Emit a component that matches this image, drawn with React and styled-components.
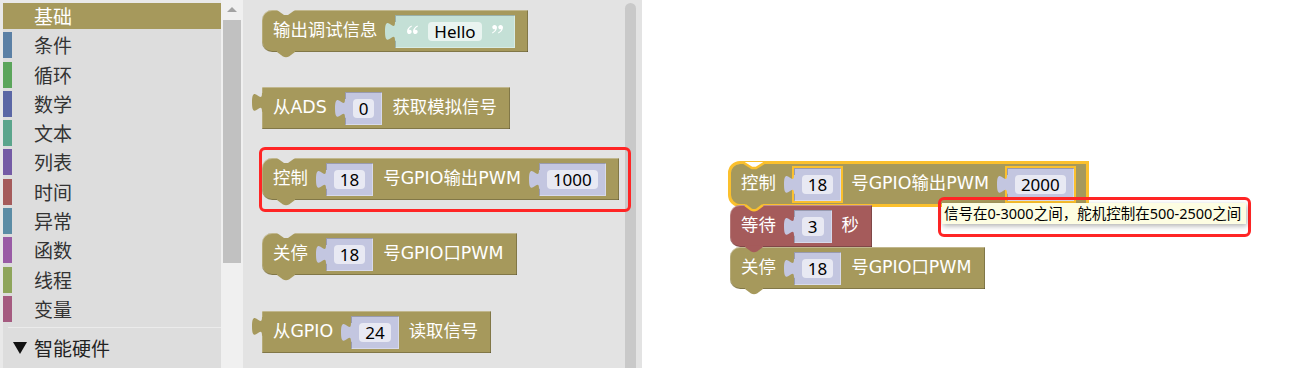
import React from "react";
import styled, { createGlobalStyle, css } from "styled-components";

const GOLD = "#a6995c";
const WAIT = "#a55b5b";
const NUM = "#c3c6e0";
const NUM_FIELD = "#e8e9f3";
const STR = "#c4e0d6";
const STR_FIELD = "#e9f4f0";
const SEL = "#fbc02d";
const FLY_BG = "#e3e3e3";

const GlobalStyle = createGlobalStyle`
  body {
    margin: 0;
    background: #fff;
    font-family: "Noto Sans", "Noto Sans CJK SC", sans-serif;
  }
`;

const Screen = styled.div`
  display: flex;
  width: 1289px;
  height: 368px;
  overflow: hidden;
  background: #fff;
`;

/* ---------- toolbox ---------- */

const Toolbox = styled.div`
  display: flex;
  width: 243px;
  flex-shrink: 0;
  background: #e9e9e9;
`;

const CategoryList = styled.div`
  display: flex;
  flex-direction: column;
  gap: 3.3px;
  width: 218px;
  margin: 3px 0 0 3px;
  background: #ddd;
`;

const Category = styled.div`
  display: flex;
  align-items: center;
  height: 26px;
  font-size: 19px;
  color: ${p => (p.$selected ? "#fff" : "#333")};
  background: ${p => (p.$selected ? GOLD : "transparent")};

  &::before {
    content: "";
    align-self: stretch;
    width: 9px;
    margin-right: 22px;
    background: ${p => p.$color};
  }
`;

const Separator = styled.div`
  height: 1px;
  margin: 2px 0 0 5px;
  background: #ebebeb;
`;

const Group = styled.div`
  display: flex;
  align-items: center;
  gap: 7px;
  height: 30px;
  margin-top: 1px;
  padding-left: 10px;
  font-size: 19px;
  color: #222;
`;

const DownTriangle = styled.span`
  width: 0;
  height: 0;
  border-left: 7px solid transparent;
  border-right: 7px solid transparent;
  border-top: 12px solid #111;
`;

const ToolboxScroll = styled.div`
  display: flex;
  flex-direction: column;
  align-items: center;
  width: 22px;
  background: #f0f0f0;
`;

const ArrowUp = styled.div`
  margin-top: 7px;
  border-left: 5px solid transparent;
  border-right: 5px solid transparent;
  border-bottom: 5px solid #a3a3a3;
`;

const ToolboxThumb = styled.div`
  width: 18px;
  height: 243px;
  margin-top: 8px;
  background: #c1c1c1;
`;

/* ---------- flyout ---------- */

const Flyout = styled.div`
  position: relative;
  display: flex;
  width: 399px;
  flex-shrink: 0;
  background: ${FLY_BG};
`;

const FlyoutBody = styled.div`
  flex: 1;
  display: flex;
  flex-direction: column;
  align-items: flex-start;
  padding: 10px 0 0 19px;
`;

const FlyoutThumb = styled.div`
  width: 11px;
  margin: 3px 6px 0 0;
  border-radius: 6px 6px 0 0;
  background: #c9c9c9;
`;

const Highlight = styled.div`
  position: absolute;
  z-index: 3;
  left: ${p => p.$x}px;
  top: ${p => p.$y}px;
  width: ${p => p.$w}px;
  height: ${p => p.$h}px;
  box-sizing: border-box;
  border: 3px solid #ff2525;
  border-radius: 6px;
`;

/* ---------- workspace ---------- */

const Workspace = styled.div`
  position: relative;
  flex: 1;
  background: #fff;
`;

const Stack = styled.div`
  position: absolute;
  left: 88px;
  top: 163px;
  display: flex;
  flex-direction: column;
  align-items: flex-start;
`;

const Tooltip = styled.div`
  position: absolute;
  z-index: 5;
  left: 300px;
  top: 203px;
  height: 21px;
  padding: 0 5px 0 2px;
  background: #fdfde2;
  box-shadow: 1px 2px 5px rgba(0, 0, 0, 0.3);
  font-size: 14.5px;
  line-height: 21px;
  color: #000;
  white-space: nowrap;
`;

/* ---------- blocks ---------- */

const BlockBody = styled.div`
  position: relative;
  display: flex;
  align-items: center;
  gap: 10px;
  height: 42px;
  box-sizing: border-box;
  margin-top: ${p => p.$mt || 0}px;
  padding: 0 13px 0 11px;
  border-radius: ${p => (p.$output ? "0" : "10px 0 0 10px")};
  background: ${p => p.$color};
  box-shadow: inset 0 1px 0 rgba(255, 255, 255, 0.3),
    inset 1px 0 0 rgba(255, 255, 255, 0.18),
    inset 0 -1px 0 rgba(0, 0, 0, 0.22),
    inset -1px 0 0 rgba(0, 0, 0, 0.22);
  color: #fff;
  font-family: "DejaVu Sans", "Noto Sans CJK SC", sans-serif;
  font-size: 17.4px;
  white-space: nowrap;
  ${p =>
    p.$selected &&
    css`
      outline: 3px solid ${SEL};
      outline-offset: -1px;
    `}
`;

const Label = styled.span`
  line-height: 1;
`;

const Socket = styled.div`
  position: relative;
  display: flex;
  align-items: center;
  gap: ${p => p.$gap || 0}px;
  height: 33px;
  box-sizing: border-box;
  margin-left: 8px;
  padding: 0 ${p => p.$pad || 8}px;
  background: ${p => p.$color};
  box-shadow: inset 1px 1px 0 rgba(0, 0, 0, 0.22),
    inset -1px -1px 0 rgba(255, 255, 255, 0.35);
  ${p =>
    p.$selected &&
    css`
      outline: 2px solid ${SEL};
    `}
`;

const Field = styled.span`
  display: inline-flex;
  align-items: center;
  justify-content: center;
  min-width: 21px;
  height: 19px;
  box-sizing: border-box;
  padding: 0 6px;
  border-radius: 4px;
  background: ${p => p.$bg};
  color: #000;
  font-family: "Noto Sans", sans-serif;
  font-size: 17px;
  line-height: 1;
`;

const QuoteSvg = styled.svg`
  align-self: flex-start;
  margin-top: 10px;
  flex-shrink: 0;
`;

const SIX =
  "M4.6,0.6 C2,1.6 0,4 0,6.4 C0,8 1.1,9 2.4,9 C3.7,9 4.7,8 4.7,6.8 C4.7,5.6 3.8,4.7 2.6,4.7 C2.2,4.7 1.9,4.8 1.7,4.9 C2,3.4 3.2,2.1 4.9,1.4 Z";

function QuoteMark({ close }) {
  return (
    <QuoteSvg width="11" height="9" viewBox="0 0 11 9">
      <g fill="#fff" transform={close ? "rotate(180 5.5 4.5)" : undefined}>
        <path d={SIX} />
        <path d={SIX} transform="translate(6 0)" />
      </g>
    </QuoteSvg>
  );
}

const TabSvg = styled.svg`
  position: absolute;
  left: -10px;
  top: ${p => p.$top}px;
  overflow: visible;
`;

const NotchSvg = styled.svg`
  position: absolute;
  left: 15px;
  top: ${p => (p.$bottom ? "100%" : "0")};
  z-index: ${p => (p.$bottom ? 2 : 1)};
  overflow: visible;
`;

function PuzzleTab({ color, top = 6 }) {
  return (
    <TabSvg $top={top} width="11" height="19" viewBox="0 0 11 19">
      <path
        d="M11,0 L10,0 C10,12.5 0,-10 0,9.4 C0,28.75 10,6.25 10,18.75 L11,18.75 Z"
        fill={color}
      />
    </TabSvg>
  );
}

function TopNotch({ bg, stroke }) {
  return (
    <NotchSvg width="18" height="6" viewBox="0 0 18 6">
      <path d="M0,-1 L0,0 L7,5 L11,5 L18,0 L18,-1 Z" fill={bg} />
      {stroke && (
        <path d="M-1,0 L7,5 L11,5 L19,0" fill="none" stroke={stroke} strokeWidth="2.5" />
      )}
    </NotchSvg>
  );
}

function BottomTab({ color, stroke }) {
  return (
    <NotchSvg $bottom width="18" height="6" viewBox="0 0 18 6">
      <path d="M0,-1.5 L0,0 L6,4.5 Q9,6 12,4.5 L18,0 L18,-1.5 Z" fill={color} />
      {stroke && (
        <path d="M0,0 L6,4.5 Q9,6 12,4.5 L18,0" fill="none" stroke={stroke} strokeWidth="2.5" />
      )}
    </NotchSvg>
  );
}

function NumInput({ value, selected }) {
  return (
    <Socket $color={NUM} $selected={selected}>
      <PuzzleTab color={NUM} top={7} />
      <Field $bg={NUM_FIELD}>{value}</Field>
    </Socket>
  );
}

function TextInput({ value }) {
  return (
    <Socket $color={STR} $pad={12} $gap={10}>
      <PuzzleTab color={STR} top={7} />
      <QuoteMark />
      <Field $bg={STR_FIELD}>{value}</Field>
      <QuoteMark close />
    </Socket>
  );
}

function Block({ color = GOLD, output, notch = true, bg = FLY_BG, selected, mt, children }) {
  const stroke = selected ? SEL : null;
  return (
    <BlockBody $color={color} $output={output} $selected={selected} $mt={mt}>
      {output && <PuzzleTab color={color} />}
      {!output && notch && <TopNotch bg={bg} stroke={stroke} />}
      {children}
      {!output && <BottomTab color={color} stroke={stroke} />}
    </BlockBody>
  );
}

const categories = [
  ["基础", GOLD],
  ["条件", "#5b80a5"],
  ["循环", "#5ba55b"],
  ["数学", "#5b67a5"],
  ["文本", "#5ba58c"],
  ["列表", "#745ba5"],
  ["时间", "#a55b5b"],
  ["异常", "#5b8ca5"],
  ["函数", "#995ba5"],
  ["线程", "#8ea55b"],
  ["变量", "#a55b80"],
];

export default function App() {
  return (
    <>
      <GlobalStyle />
      <Screen>
        <Toolbox>
          <CategoryList>
            {categories.map(([name, color], i) => (
              <Category key={name} $color={color} $selected={i === 0}>
                {name}
              </Category>
            ))}
            <Separator />
            <Group>
              <DownTriangle />
              智能硬件
            </Group>
          </CategoryList>
          <ToolboxScroll>
            <ArrowUp />
            <ToolboxThumb />
          </ToolboxScroll>
        </Toolbox>

        <Flyout>
          <FlyoutBody>
            <Block>
              <Label>输出调试信息</Label>
              <TextInput value="Hello" />
            </Block>
            <Block output mt={35}>
              <Label>从ADS</Label>
              <NumInput value="0" />
              <Label>获取模拟信号</Label>
            </Block>
            <Block mt={29}>
              <Label>控制</Label>
              <NumInput value="18" />
              <Label>号GPIO输出PWM</Label>
              <NumInput value="1000" />
            </Block>
            <Block mt={33}>
              <Label>关停</Label>
              <NumInput value="18" />
              <Label>号GPIO口PWM</Label>
            </Block>
            <Block output mt={36}>
              <Label>从GPIO</Label>
              <NumInput value="24" />
              <Label>读取信号</Label>
            </Block>
          </FlyoutBody>
          <FlyoutThumb />
          <Highlight $x={16} $y={147} $w={372} $h={65} />
        </Flyout>

        <Workspace>
          <Stack>
            <Block selected bg="#fff">
              <Label>控制</Label>
              <NumInput value="18" selected />
              <Label>号GPIO输出PWM</Label>
              <NumInput value="2000" selected />
            </Block>
            <Block color={WAIT} notch={false}>
              <Label>等待</Label>
              <NumInput value="3" />
              <Label>秒</Label>
            </Block>
            <Block notch={false}>
              <Label>关停</Label>
              <NumInput value="18" />
              <Label>号GPIO口PWM</Label>
            </Block>
          </Stack>
          <Tooltip>信号在0-3000之间，舵机控制在500-2500之间</Tooltip>
          <Highlight $x={296} $y={197} $w={313} $h={40} />
        </Workspace>
      </Screen>
    </>
  );
}
